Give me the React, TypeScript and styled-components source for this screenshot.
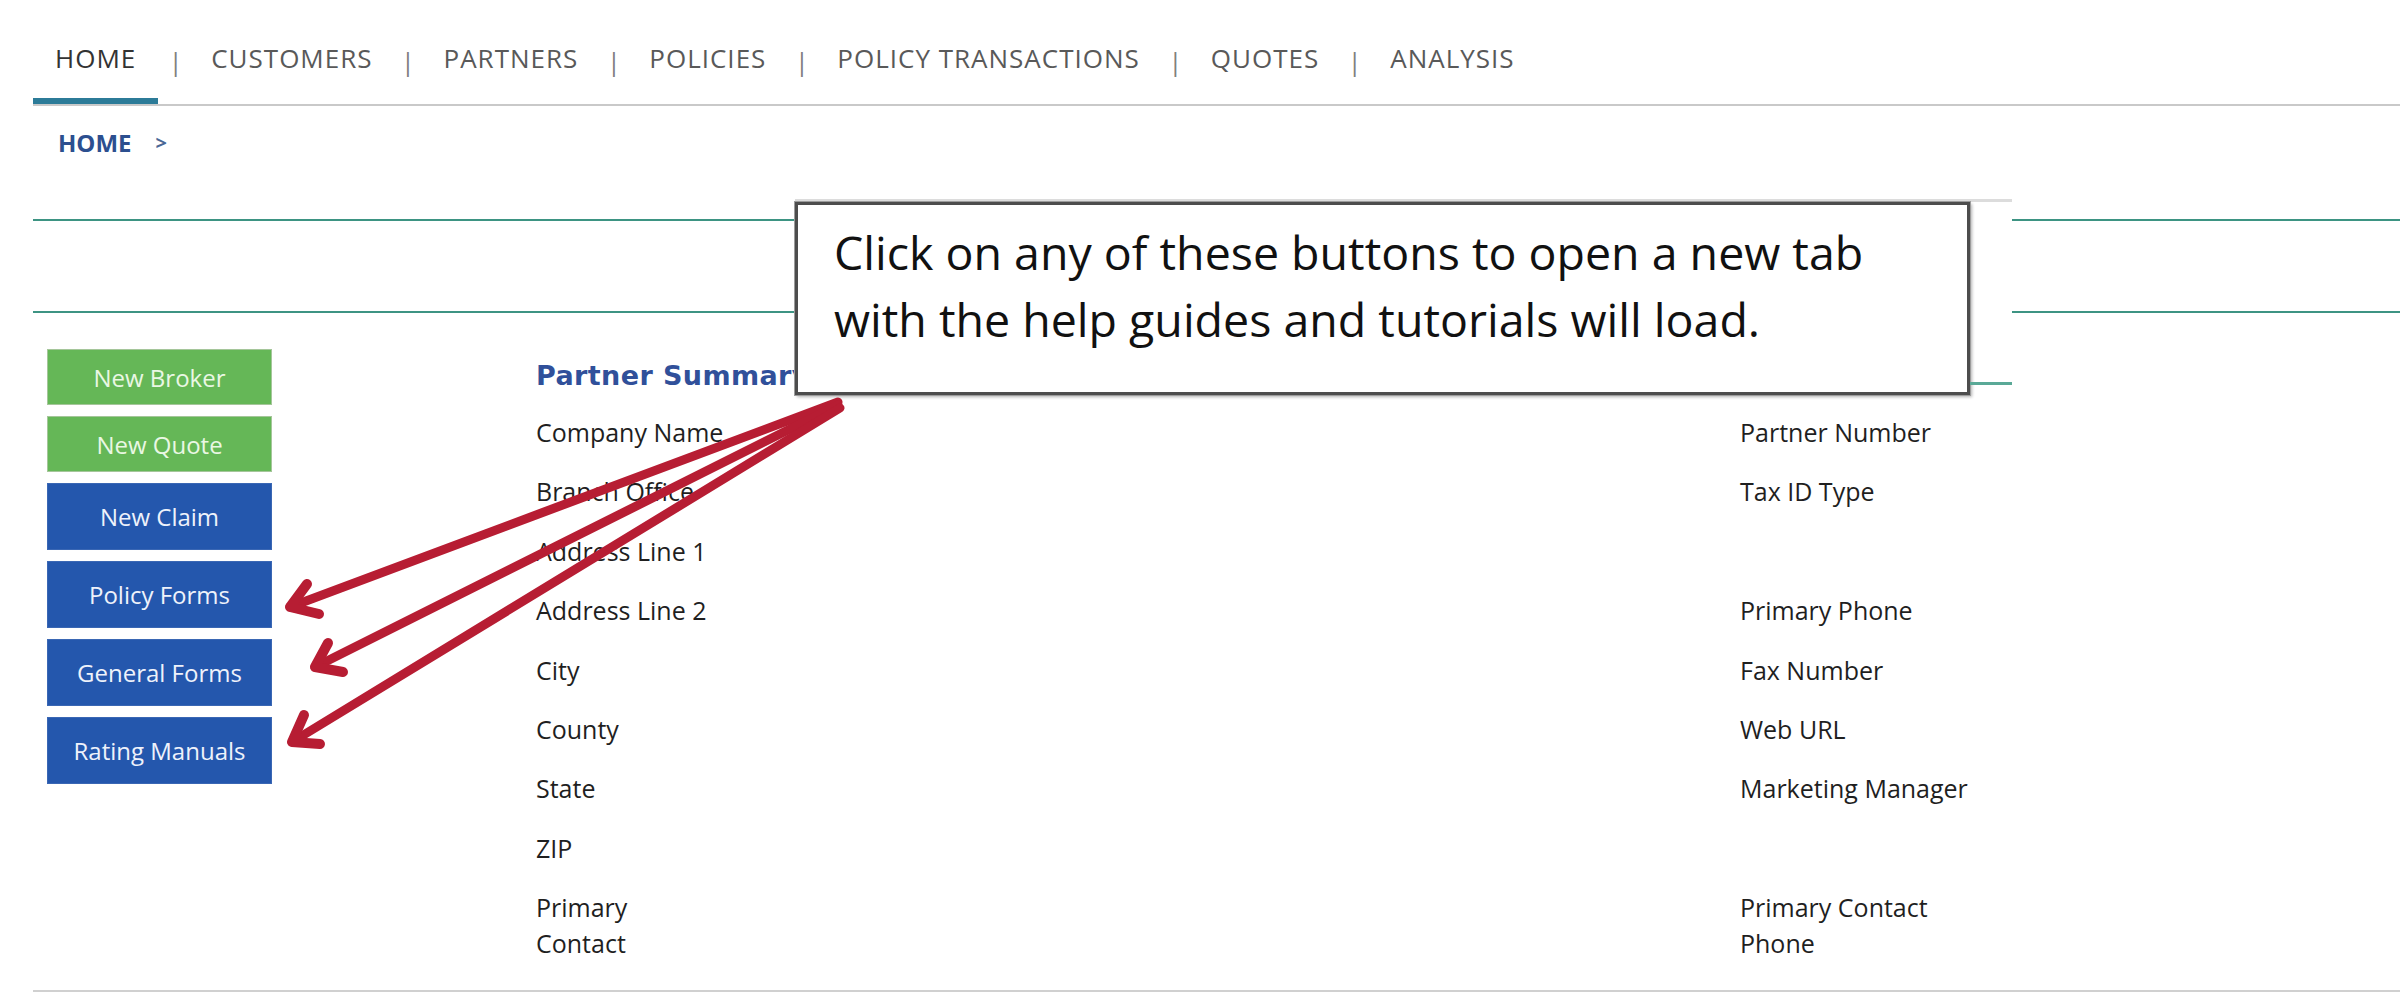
import React from "react";
import styled, { createGlobalStyle } from "styled-components";

const GlobalStyle = createGlobalStyle`
  body {
    margin: 0;
    background: #fff;
    font-family: "Open Sans", "Liberation Sans", sans-serif;
  }
`;

const Page = styled.div`
  position: relative;
  width: 2400px;
  height: 1000px;
  overflow: hidden;
  padding-left: 33px;
  box-sizing: border-box;
`;

const NavBar = styled.nav`
  display: flex;
  height: 104px;
  border-bottom: 2px solid #c9c9c9;
`;

const NavTab = styled.div<{ $active?: boolean }>`
  position: relative;
  display: flex;
  align-items: center;
  padding: ${(p) => (p.$active ? "12px 22px 0" : "12px 18px 0")};
  font-size: 26px;
  letter-spacing: 1px;
  color: ${(p) => (p.$active ? "#333" : "#595959")};

  &::after {
    content: "";
    display: ${(p) => (p.$active ? "block" : "none")};
    position: absolute;
    left: 0;
    right: 0;
    bottom: 0;
    height: 6px;
    background: #2c7b98;
  }
`;

const NavSep = styled.span`
  display: flex;
  align-items: center;
  justify-content: center;
  width: 35px;
  padding-top: 18px;
  font-size: 26px;
  color: #808080;
`;

const Breadcrumb = styled.div`
  display: flex;
  align-items: center;
  height: 36px;
  margin-top: 18px;
  padding-left: 25px;
  font-size: 24px;
  font-weight: 700;
  color: #2c4f8f;
`;

const Chevron = styled.span`
  margin-left: 24px;
  font-size: 20px;
  color: #4b6796;
`;

const ToolStrip = styled.div`
  height: 90px;
  margin-top: 59px;
  border-top: 2px solid #3d9483;
  border-bottom: 2px solid #3d9483;
`;

const Main = styled.div`
  display: flex;
  margin-top: 36px;
  padding-left: 14px;
`;

const Sidebar = styled.div`
  display: flex;
  flex-direction: column;
  gap: 11px;
  width: 225px;
`;

const ActionButton = styled.button<{ $tone: "green" | "blue" }>`
  height: ${(p) => (p.$tone === "green" ? "56px" : "67px")};
  border: 1px solid ${(p) => (p.$tone === "green" ? "#a5c69a" : "#3a67b4")};
  background: ${(p) => (p.$tone === "green" ? "#65b757" : "#2457ad")};
  color: ${(p) => (p.$tone === "green" ? "#eaf7e4" : "#eef2fb")};
  font-family: "Open Sans", "Liberation Sans", sans-serif;
  font-size: 24px;
  padding: 0;
  cursor: pointer;
`;

const Summary = styled.section`
  width: 1476px;
  margin-top: 8px;
  margin-left: 264px;
`;

const HeadingRow = styled.div`
  display: flex;
  align-items: center;
  height: 36px;
`;

const HeadingTitle = styled.h2`
  margin: 0;
  font-family: "DejaVu Sans", "Open Sans", sans-serif;
  font-size: 27px;
  font-weight: 700;
  letter-spacing: 0.4px;
  color: #30509a;
`;

const HeadingRule = styled.div`
  flex: 1;
  height: 3px;
  margin-top: 14px;
  background: #3d9483;
`;

const FieldGrid = styled.div`
  display: grid;
  grid-template-columns: 1204px 1fr;
  margin-top: 10px;
`;

const FieldLabel = styled.div`
  padding: 12px 0;
  min-height: 35.4px;
  line-height: 35.4px;
  font-size: 25px;
  color: #1f1f1f;
`;

const FooterRule = styled.div`
  height: 2px;
  margin-top: 17px;
  background: #d0d0d0;
`;

const CalloutLayer = styled.div`
  position: absolute;
  left: 795px;
  top: 199px;
  width: 1217px;
  height: 203px;
  background: #fff;
  border-top: 3px solid #dcdcdc;
  box-sizing: border-box;

  &::after {
    content: "";
    position: absolute;
    right: 0;
    top: 180px;
    width: 42px;
    height: 3px;
    background: #5aa997;
  }
`;

const CalloutBox = styled.div`
  width: 1175px;
  height: 193px;
  box-sizing: border-box;
  padding: 14px 0 0 36px;
  border: 3px solid #4d4d4d;
  box-shadow: 0 0 0 1px #9c9c9c, 2px 2px 3px rgba(0, 0, 0, 0.3);
  background: #fff;
  font-size: 46.5px;
  font-weight: 500;
  line-height: 67px;
  color: #111;
`;

const ArrowLayer = styled.svg`
  position: absolute;
  left: 0;
  top: 0;
  pointer-events: none;
`;

const navItems = [
  "HOME",
  "CUSTOMERS",
  "PARTNERS",
  "POLICIES",
  "POLICY TRANSACTIONS",
  "QUOTES",
  "ANALYSIS",
];

const buttons: { label: string; tone: "green" | "blue" }[] = [
  { label: "New Broker", tone: "green" },
  { label: "New Quote", tone: "green" },
  { label: "New Claim", tone: "blue" },
  { label: "Policy Forms", tone: "blue" },
  { label: "General Forms", tone: "blue" },
  { label: "Rating Manuals", tone: "blue" },
];

const leftFields = [
  ["Company Name"],
  ["Branch Office"],
  ["Address Line 1"],
  ["Address Line 2"],
  ["City"],
  ["County"],
  ["State"],
  ["ZIP"],
  ["Primary", "Contact"],
];

const rightFields = [
  ["Partner Number"],
  ["Tax ID Type"],
  [],
  ["Primary Phone"],
  ["Fax Number"],
  ["Web URL"],
  ["Marketing Manager"],
  [],
  ["Primary Contact", "Phone"],
];

const arrows = [
  { line: "M838 402 L290 607", head: "M307 584 L290 607 L319 614" },
  { line: "M838 405 L315 667", head: "M328 643 L315 667 L343 672" },
  { line: "M840 408 L292 742", head: "M304 715 L292 742 L320 744" },
];

function Label({ lines }: { lines: string[] }) {
  return (
    <FieldLabel>
      {lines.map((l, i) => (
        <React.Fragment key={l}>
          {i > 0 && <br />}
          {l}
        </React.Fragment>
      ))}
    </FieldLabel>
  );
}

export default function App() {
  return (
    <Page>
      <GlobalStyle />
      <NavBar>
        {navItems.map((item, i) => (
          <React.Fragment key={item}>
            {i > 0 && <NavSep>|</NavSep>}
            <NavTab $active={i === 0}>{item}</NavTab>
          </React.Fragment>
        ))}
      </NavBar>

      <Breadcrumb>
        HOME <Chevron>&gt;</Chevron>
      </Breadcrumb>

      <ToolStrip />

      <Main>
        <Sidebar>
          {buttons.map((b) => (
            <ActionButton key={b.label} $tone={b.tone}>
              {b.label}
            </ActionButton>
          ))}
        </Sidebar>

        <Summary>
          <HeadingRow>
            <HeadingTitle>Partner Summary</HeadingTitle>
            <HeadingRule />
          </HeadingRow>
          <FieldGrid>
            {leftFields.map((l, i) => (
              <React.Fragment key={i}>
                <Label lines={l} />
                <Label lines={rightFields[i]} />
              </React.Fragment>
            ))}
          </FieldGrid>
        </Summary>
      </Main>

      <FooterRule />

      <CalloutLayer>
        <CalloutBox>
          Click on any of these buttons to open a new tab
          <br />
          with the help guides and tutorials will load.
        </CalloutBox>
      </CalloutLayer>

      <ArrowLayer width="2400" height="1000" viewBox="0 0 2400 1000">
        {arrows.map((a, i) => (
          <g
            key={i}
            fill="none"
            stroke="#b71d33"
            strokeWidth="9"
            strokeLinecap="round"
            strokeLinejoin="round"
          >
            <path d={a.line} />
            <path d={a.head} strokeWidth="10" />
          </g>
        ))}
      </ArrowLayer>
    </Page>
  );
}
